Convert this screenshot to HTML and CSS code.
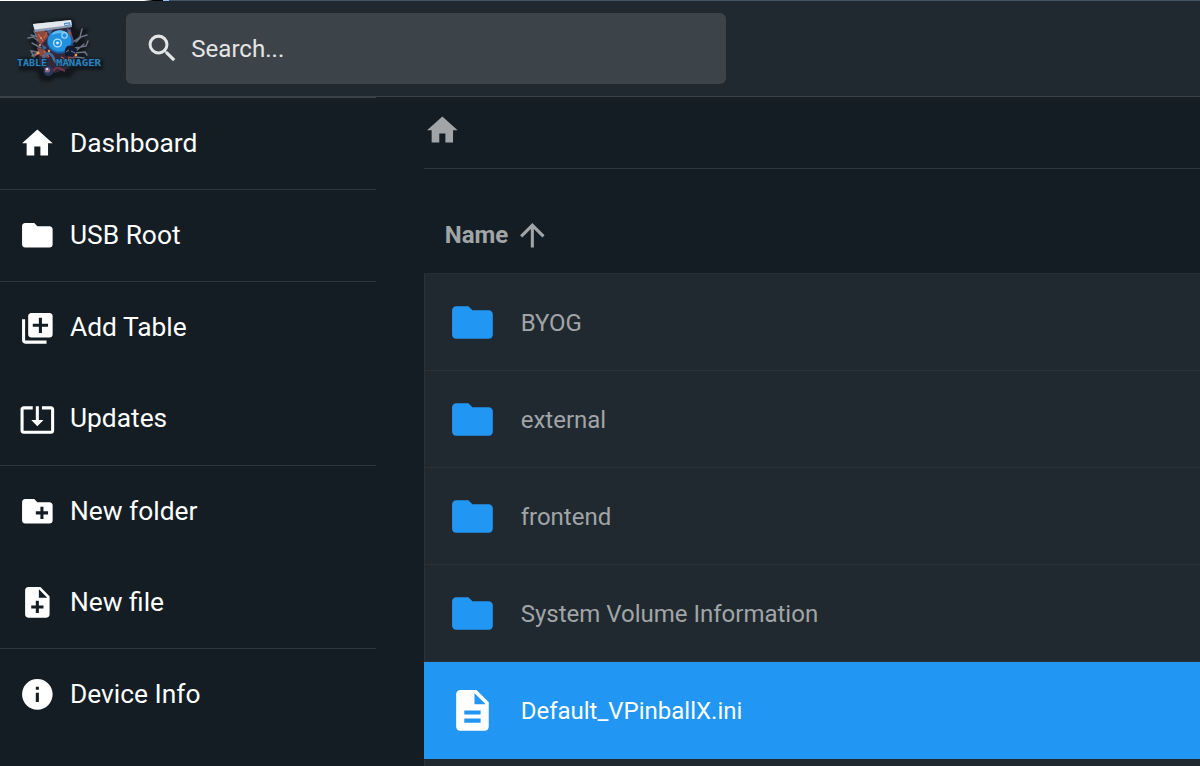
FILE: index.html
```html
<!DOCTYPE html>
<html lang="en">
<head>
<meta charset="utf-8">
<title>Table Manager</title>
<link rel="stylesheet" href="styles.css">
</head>
<body>
<header class="header">
  <svg class="logo" viewBox="0 0 90 66" width="90" height="66">
    <g class="logo-shadow"><path d="M17 7L57 3l5 12 12-2-6 14 8 1-8 9 4 7h16v11H62l-8 8H40l-5 4-10-2-3-9H4V43l16-1-2-10-5-7 7-1-4-9 7 1z"/></g>
    <path fill="#33283a" d="M19 12l36-3 6 35-7 9-14 5-15-6z"/>
    <g fill="none" stroke="#6b7484" stroke-width="1.5" stroke-linecap="round">
      <path d="M26 28l-8-6-5 1M26 33l-9-5M28 38l-12-2 3 6M23 24l-4-8M58 27l7-5 2-8M60 33l11-2 2-5M59 38l11-1 2 3M61 27l5-5 6-2M60 42l9 1M26 23l-10-3M24 37l-7 4M62 35l7-6"/>
    </g>
    <path fill="#8a4a42" d="M21 17l8-2 5 6-8 9-3-4zM55 14l4 12-5 6zM22 33l8 2 3 8-8-2zM53 39l7-2-1 8-6 4z"/>
    <path fill="#44649b" d="M31 15l7-1-3 6zM52 13l4 3-3 3zM27 29l5 4-4 2zM57 34l5 1-4 4z"/>
    <g fill="none" stroke="#c65d48" stroke-width="1.3"><path d="M23 19l5 7M32 17l-3 6M54 17l3 8M29 36l5 6M57 33l-4 6M38 44l8 7M46 42l10 5M24 37l-4 4"/></g>
    <path fill="#8f9cb4" d="M18 9l38-4 1 7-37 5z"/>
    <path fill="#e2e7ee" d="M18 9l38-4 .8 5-37.300 4.500z"/>
    <path fill="#3e83ca" d="M49 8l6-.8.6 3-6 .7z"/>
    <path stroke="#d2e9f8" d="M50 9.500l4.500-.5"/>
    <ellipse cx="45" cy="27" rx="13" ry="11.500" fill="#175f9e"/>
    <ellipse cx="44.500" cy="26" rx="11.800" ry="10.500" fill="#2390df"/>
    <path fill="#62bef1" d="M36 20c4-6 13-6 17-1-6-1-11-1-17 1"/>
    <circle cx="42.500" cy="28" r="3.900" fill="#2390df" stroke="#a8e3fb" stroke-width="1.400"/>
    <circle cx="42.500" cy="28" r="1.400" fill="#d9f5ff"/>
    <circle cx="49.500" cy="20.500" r="2.700" fill="#2390df" stroke="#9edef8" stroke-width="1.100"/>
    <path fill="#151c31" d="M50 35c1-6 10-6 12 1l-4 6-8-1z"/>
    <path d="M51 37l3-2M56 36l4 2" stroke="#7187a8"/>
    <g fill="#f39a52"><circle cx="23" cy="38" r="1.500"/><circle cx="34" cy="36" r="1.200"/><circle cx="61" cy="40" r="1.300"/><circle cx="29" cy="41" r="1.300"/><circle cx="26" cy="23" r="1"/><circle cx="54" cy="45" r="1.500"/><circle cx="25" cy="30" r="1.100"/></g>
    <path d="M28 44c3-8 8-7 11 0s7 5 11 1" fill="none" stroke="#486b99" stroke-width="2.600"/>
    <circle cx="33.500" cy="56" r="5" fill="#28375d"/><circle cx="32.500" cy="55" r="2.600" fill="#8c6783"/><circle cx="32" cy="54" r="1.200" fill="#e0d6e2"/>
    <path d="M38 56l4-4 8 4" stroke="#743343" stroke-width="2" fill="none"/>
    <text class="logo-text" x="2" y="51" textLength="30" lengthAdjust="spacingAndGlyphs">TABLE</text>
    <text class="logo-text" x="41" y="51" textLength="45" lengthAdjust="spacingAndGlyphs">MANAGER</text>
  </svg>
  <div class="search">
    <svg class="icon" viewBox="0 0 24 24"><path d="M15.500 14h-.79l-.28-.27A6.471 6.471 0 0 0 16 9.500 6.500 6.500 0 1 0 9.500 16c1.610 0 3.090-.59 4.230-1.570l.27.28v.79l5 4.990L20.490 19l-4.990-5zm-6 0C7.010 14 5 11.990 5 9.500S7.010 5 9.500 5 14 7.010 14 9.500 11.990 14 9.500 14z"/></svg>
    <span class="search-label">Search...</span>
  </div>
</header>
<div class="body">
  <nav class="sidebar">
    <div class="group">
      <a class="action"><svg class="icon" viewBox="0 0 24 24"><path d="M10 20v-6h4v6h5v-8h3L12 3 2 12h3v8z"/></svg><span>Dashboard</span></a>
    </div>
    <div class="group">
      <a class="action"><svg class="icon" viewBox="0 0 24 24"><path d="M10 4H4c-1.100 0-2 .9-2 2v12c0 1.100.9 2 2 2h16c1.100 0 2-.9 2-2V8c0-1.100-.9-2-2-2h-8l-2-2z"/></svg><span>USB Root</span></a>
    </div>
    <div class="group">
      <a class="action"><svg class="icon" viewBox="0 0 24 24"><path d="M4 6H2v14c0 1.100.9 2 2 2h14v-2H4V6zm16-4H8c-1.100 0-2 .9-2 2v12c0 1.100.9 2 2 2h12c1.100 0 2-.9 2-2V4c0-1.100-.9-2-2-2zm-1 9h-4v4h-2v-4H9V9h4V5h2v4h4v2z"/></svg><span>Add Table</span></a>
      <a class="action"><svg class="icon" viewBox="0 0 24 24"><path d="M12 16.500l4-4h-3v-9h-2v9H8l4 4zm9-13h-6v1.990h6v14.030H3V5.490h6V3.500H3c-1.100 0-2 .9-2 2v14c0 1.100.9 2 2 2h18c1.100 0 2-.9 2-2v-14c0-1.100-.9-2-2-2z"/></svg><span>Updates</span></a>
    </div>
    <div class="group">
      <a class="action"><svg class="icon" viewBox="0 0 24 24"><path d="M20 6h-8l-2-2H4c-1.110 0-1.990.89-1.990 2L2 18c0 1.110.89 2 2 2h16c1.110 0 2-.89 2-2V8c0-1.110-.89-2-2-2zm-1 8h-3v3h-2v-3h-3v-2h3V9h2v3h3v2z"/></svg><span>New folder</span></a>
      <a class="action"><svg class="icon" viewBox="0 0 24 24"><path d="M14 2H6c-1.100 0-1.990.9-1.990 2L4 20c0 1.100.89 2 1.990 2H18c1.100 0 2-.9 2-2V8l-6-6zm2 14h-3v3h-2v-3H8v-2h3v-3h2v3h3v2zm-3-7V3.500L18.500 9H13z"/></svg><span>New file</span></a>
    </div>
    <div class="group">
      <a class="action"><svg class="icon" viewBox="0 0 24 24"><path d="M12 2a10 10 0 1 0 0 20 10 10 0 0 0 0-20zm1 15h-2v-6h2v6zm0-8h-2V7h2v2z"/></svg><span>Device Info</span></a>
    </div>
  </nav>
  <main class="main">
    <div class="crumbs"><svg class="icon" viewBox="0 0 24 24"><path d="M10 20v-6h4v6h5v-8h3L12 3 2 12h3v8z"/></svg></div>
    <div class="list-head"><span>Name</span><svg class="icon" viewBox="0 0 24 24"><path d="M4 12l1.410 1.410L11 7.830V20h2V7.830l5.580 5.590L20 12l-8-8-8 8z"/></svg></div>
    <div class="list">
      <div class="item"><svg class="item-icon" viewBox="0 0 24 24"><path d="M10 4H4c-1.100 0-2 .9-2 2v12c0 1.100.9 2 2 2h16c1.100 0 2-.9 2-2V8c0-1.100-.9-2-2-2h-8l-2-2z"/></svg><span>BYOG</span></div>
      <div class="item"><svg class="item-icon" viewBox="0 0 24 24"><path d="M10 4H4c-1.100 0-2 .9-2 2v12c0 1.100.9 2 2 2h16c1.100 0 2-.9 2-2V8c0-1.100-.9-2-2-2h-8l-2-2z"/></svg><span>external</span></div>
      <div class="item"><svg class="item-icon" viewBox="0 0 24 24"><path d="M10 4H4c-1.100 0-2 .9-2 2v12c0 1.100.9 2 2 2h16c1.100 0 2-.9 2-2V8c0-1.100-.9-2-2-2h-8l-2-2z"/></svg><span>frontend</span></div>
      <div class="item"><svg class="item-icon" viewBox="0 0 24 24"><path d="M10 4H4c-1.100 0-2 .9-2 2v12c0 1.100.9 2 2 2h16c1.100 0 2-.9 2-2V8c0-1.100-.9-2-2-2h-8l-2-2z"/></svg><span>System Volume Information</span></div>
      <div class="item selected"><svg class="item-icon" viewBox="0 0 24 24"><path d="M14 2H6c-1.100 0-1.990.9-1.990 2L4 20c0 1.100.89 2 1.990 2H18c1.100 0 2-.9 2-2V8l-6-6zm2 16H8v-2h8v2zm0-4H8v-2h8v2zm-3-5V3.500L18.500 9H13z"/></svg><span>Default_VPinballX.ini</span></div>
      <div class="item item-next"></div>
    </div>
  </main>
</div>
</body>
</html>
```
FILE: styles.css
```css
* { box-sizing: border-box; }
body {
  margin: 0;
  height: 766px;
  overflow: hidden;
  display: flex;
  flex-direction: column;
  background: #141d24;
  font-family: Roboto, sans-serif;
  font-size: 24px;
  color: #fff;
}
svg { display: block; fill: currentColor; flex: none; }
.icon { width: 36.7px; height: 36.7px; }
.header {
  flex: none;
  height: 97px;
  display: flex;
  align-items: flex-start;
  padding: 13px 0 0 15px;
  background: linear-gradient(90deg, #fff 0 144px, #000 153px 163px, #8fc0fb 163px 169px, #435465 169px) 0 0 / 100% 1px no-repeat #20292f;
  border-bottom: 1px solid #3a4248;
}
.logo { margin: 2px 21px 0 0; overflow: visible; }
.logo-shadow { fill: #12171d; filter: blur(1.5px); }
.logo-text {
  font: bold 9px "DejaVu Sans Mono", monospace;
  fill: #2c83b9;
  stroke: #10243b;
  stroke-width: 1.4px;
  paint-order: stroke;
}
.search {
  width: 600px;
  height: 71px;
  border-radius: 6px;
  background: #3c4449;
  display: flex;
  align-items: center;
  padding-left: 17.5px;
  gap: 11px;
  color: #e4e5e6;
}
.search-label { font-size: 24.1px; }
.search .icon { margin-top: .5px; }
.body { flex: 1; min-height: 0; display: flex; gap: 48px; background: linear-gradient(#192127, #141d24 7px); }
.sidebar { width: 376px; flex: none; font-size: 26.35px; }
.group { border-top: 1px solid #2f373e; }
.group:first-child { border-top-color: #3a4248; }
.action { display: flex; align-items: center; height: 91.17px; padding-left: 19.2px; gap: 14.1px; }
.action span { margin-top: -1.3px; }
.main { flex: 1; min-width: 0; color: #a1a5a7; }
.crumbs { height: 72px; border-bottom: 1px solid #2f373e; padding: 15px 0 0; }
.crumbs .icon { margin-left: -.2px; }
.list-head { height: 104px; padding: 27px 0 0 20.8px; display: flex; align-items: center; gap: 6px; font-weight: bold; }
.list-head .icon { margin-top: 1px; }
.item {
  height: 97px;
  display: flex;
  align-items: center;
  gap: 23.6px;
  padding-left: 23.2px;
  background: #20292f;
  border-left: 1px solid #2b3339;
  border-bottom: 1px solid #2b3339;
}
.item:first-child { height: 98px; border-top: 1px solid #242d33; }
.item span { margin-top: 1px; }
.item-icon { width: 48.9px; height: 48.9px; color: #2196f3; }
.item.selected { background: #2196f3; border-color: #2196f3; color: #fff; }
.selected .item-icon { color: #fff; }
.item-next { height: 7px; border-bottom: 0; }
```
